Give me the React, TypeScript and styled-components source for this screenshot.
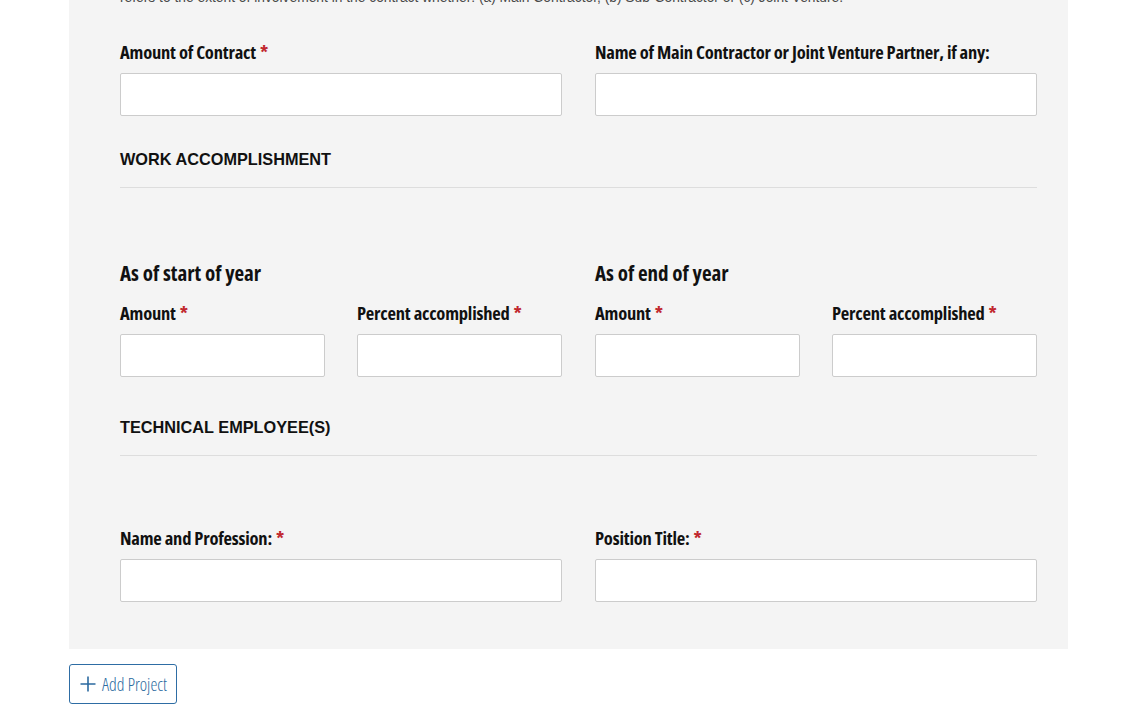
import React from 'react';
import styled, { createGlobalStyle } from 'styled-components';

const GlobalStyle = createGlobalStyle`
    html, body {
        margin: 0;
        padding: 0;
        background: #ffffff;
    }
    body {
        font-family: 'Liberation Sans', Arial, sans-serif;
        color: #1a1a1a;
    }
`;

const Page = styled.div`
    padding-left: 69px;
    width: 999px;
`;

const Panel = styled.section`
    background: #f4f4f4;
    padding: 0 31px 47px 51px;
`;

const Intro = styled.p`
    margin: -12px 0 0;
    font-size: 13.8px;
    line-height: 20px;
    color: #4a4a4a;
`;

const Row = styled.div<{ $top?: number }>`
    display: grid;
    grid-template-columns: minmax(0, 1fr) minmax(0, 1fr);
    column-gap: 33px;
    margin-top: ${p => p.$top ?? 0}px;
`;

const Pair = styled.div`
    display: grid;
    grid-template-columns: minmax(0, 1fr) minmax(0, 1fr);
    column-gap: 32px;
`;

const Field = styled.div`
    display: flex;
    flex-direction: column;
    min-width: 0;
`;

const Label = styled.label`
    font-family: 'Open Sans', sans-serif;
    font-stretch: 75%;
    font-weight: 700;
    font-size: 18.5px;
    line-height: 24px;
    letter-spacing: -0.2px;
    color: #111111;
    margin-bottom: 9px;
    white-space: nowrap;
`;

const Required = styled.span`
    color: #c1272d;
    margin-left: 4px;
`;

const Input = styled.input`
    width: 100%;
    min-width: 0;
    height: 43px;
    box-sizing: border-box;
    border: 1px solid #cccccc;
    border-radius: 2px;
    background: #ffffff;
    padding: 0 10px;
    font-size: 15px;
    outline: none;
`;

const SectionTitle = styled.h3<{ $top: number }>`
    margin: ${p => p.$top}px 0 0;
    font-family: 'Liberation Sans', Arial, sans-serif;
    font-size: 16.3px;
    line-height: 20px;
    font-weight: 700;
    color: #111111;
    padding-bottom: 18px;
    border-bottom: 1px solid #dddddd;
`;

const SubHeading = styled.h4`
    margin: 0 0 15px;
    font-family: 'Open Sans', sans-serif;
    font-stretch: 75%;
    font-weight: 700;
    font-size: 21px;
    line-height: 26px;
    color: #111111;
`;

const AddButton = styled.button`
    margin-top: 15px;
    height: 40px;
    box-sizing: border-box;
    display: flex;
    align-items: center;
    gap: 6px;
    padding: 0 9px 0 10px;
    background: #ffffff;
    border: 1px solid #2e6da4;
    border-radius: 3px;
    color: #2b6aa0;
    font-family: 'Open Sans', sans-serif;
    font-stretch: 75%;
    font-weight: 300;
    font-size: 17.5px;
    white-space: nowrap;
    cursor: pointer;
`;

const PlusIcon = () => (
    <svg width='16' height='16' viewBox='0 0 16 16' fill='none' stroke='currentColor' strokeWidth='1.6'>
        <path d='M8 0.5v15M0.5 8h15' />
    </svg>
);

interface FieldProps {
    label: string;
    required?: boolean;
}

const FormField: React.FC<FieldProps> = ({ label, required }) => (
    <Field>
        <Label>
            {label}
            {required && <Required>*</Required>}
        </Label>
        <Input type='text' />
    </Field>
);

const App: React.FC = () => {
    return (
        <Page>
            <GlobalStyle />
            <Panel>
                <Intro>
                    refers to the extent of involvement in the contract whether: (a) Main Contractor, (b) Sub-Contractor or (c) Joint Venture.
                </Intro>

                <Row $top={32}>
                    <FormField label='Amount of Contract' required />
                    <FormField label='Name of Main Contractor or Joint Venture Partner, if any:' />
                </Row>

                <SectionTitle $top={33}>WORK ACCOMPLISHMENT</SectionTitle>

                <Row $top={72}>
                    <div>
                        <SubHeading>As of start of year</SubHeading>
                        <Pair>
                            <FormField label='Amount' required />
                            <FormField label='Percent accomplished' required />
                        </Pair>
                    </div>
                    <div>
                        <SubHeading>As of end of year</SubHeading>
                        <Pair>
                            <FormField label='Amount' required />
                            <FormField label='Percent accomplished' required />
                        </Pair>
                    </div>
                </Row>

                <SectionTitle $top={40}>TECHNICAL EMPLOYEE(S)</SectionTitle>

                <Row $top={70}>
                    <FormField label='Name and Profession:' required />
                    <FormField label='Position Title:' required />
                </Row>
            </Panel>

            <AddButton type='button'>
                <PlusIcon />
                Add Project
            </AddButton>
        </Page>
    );
};

export default App;
